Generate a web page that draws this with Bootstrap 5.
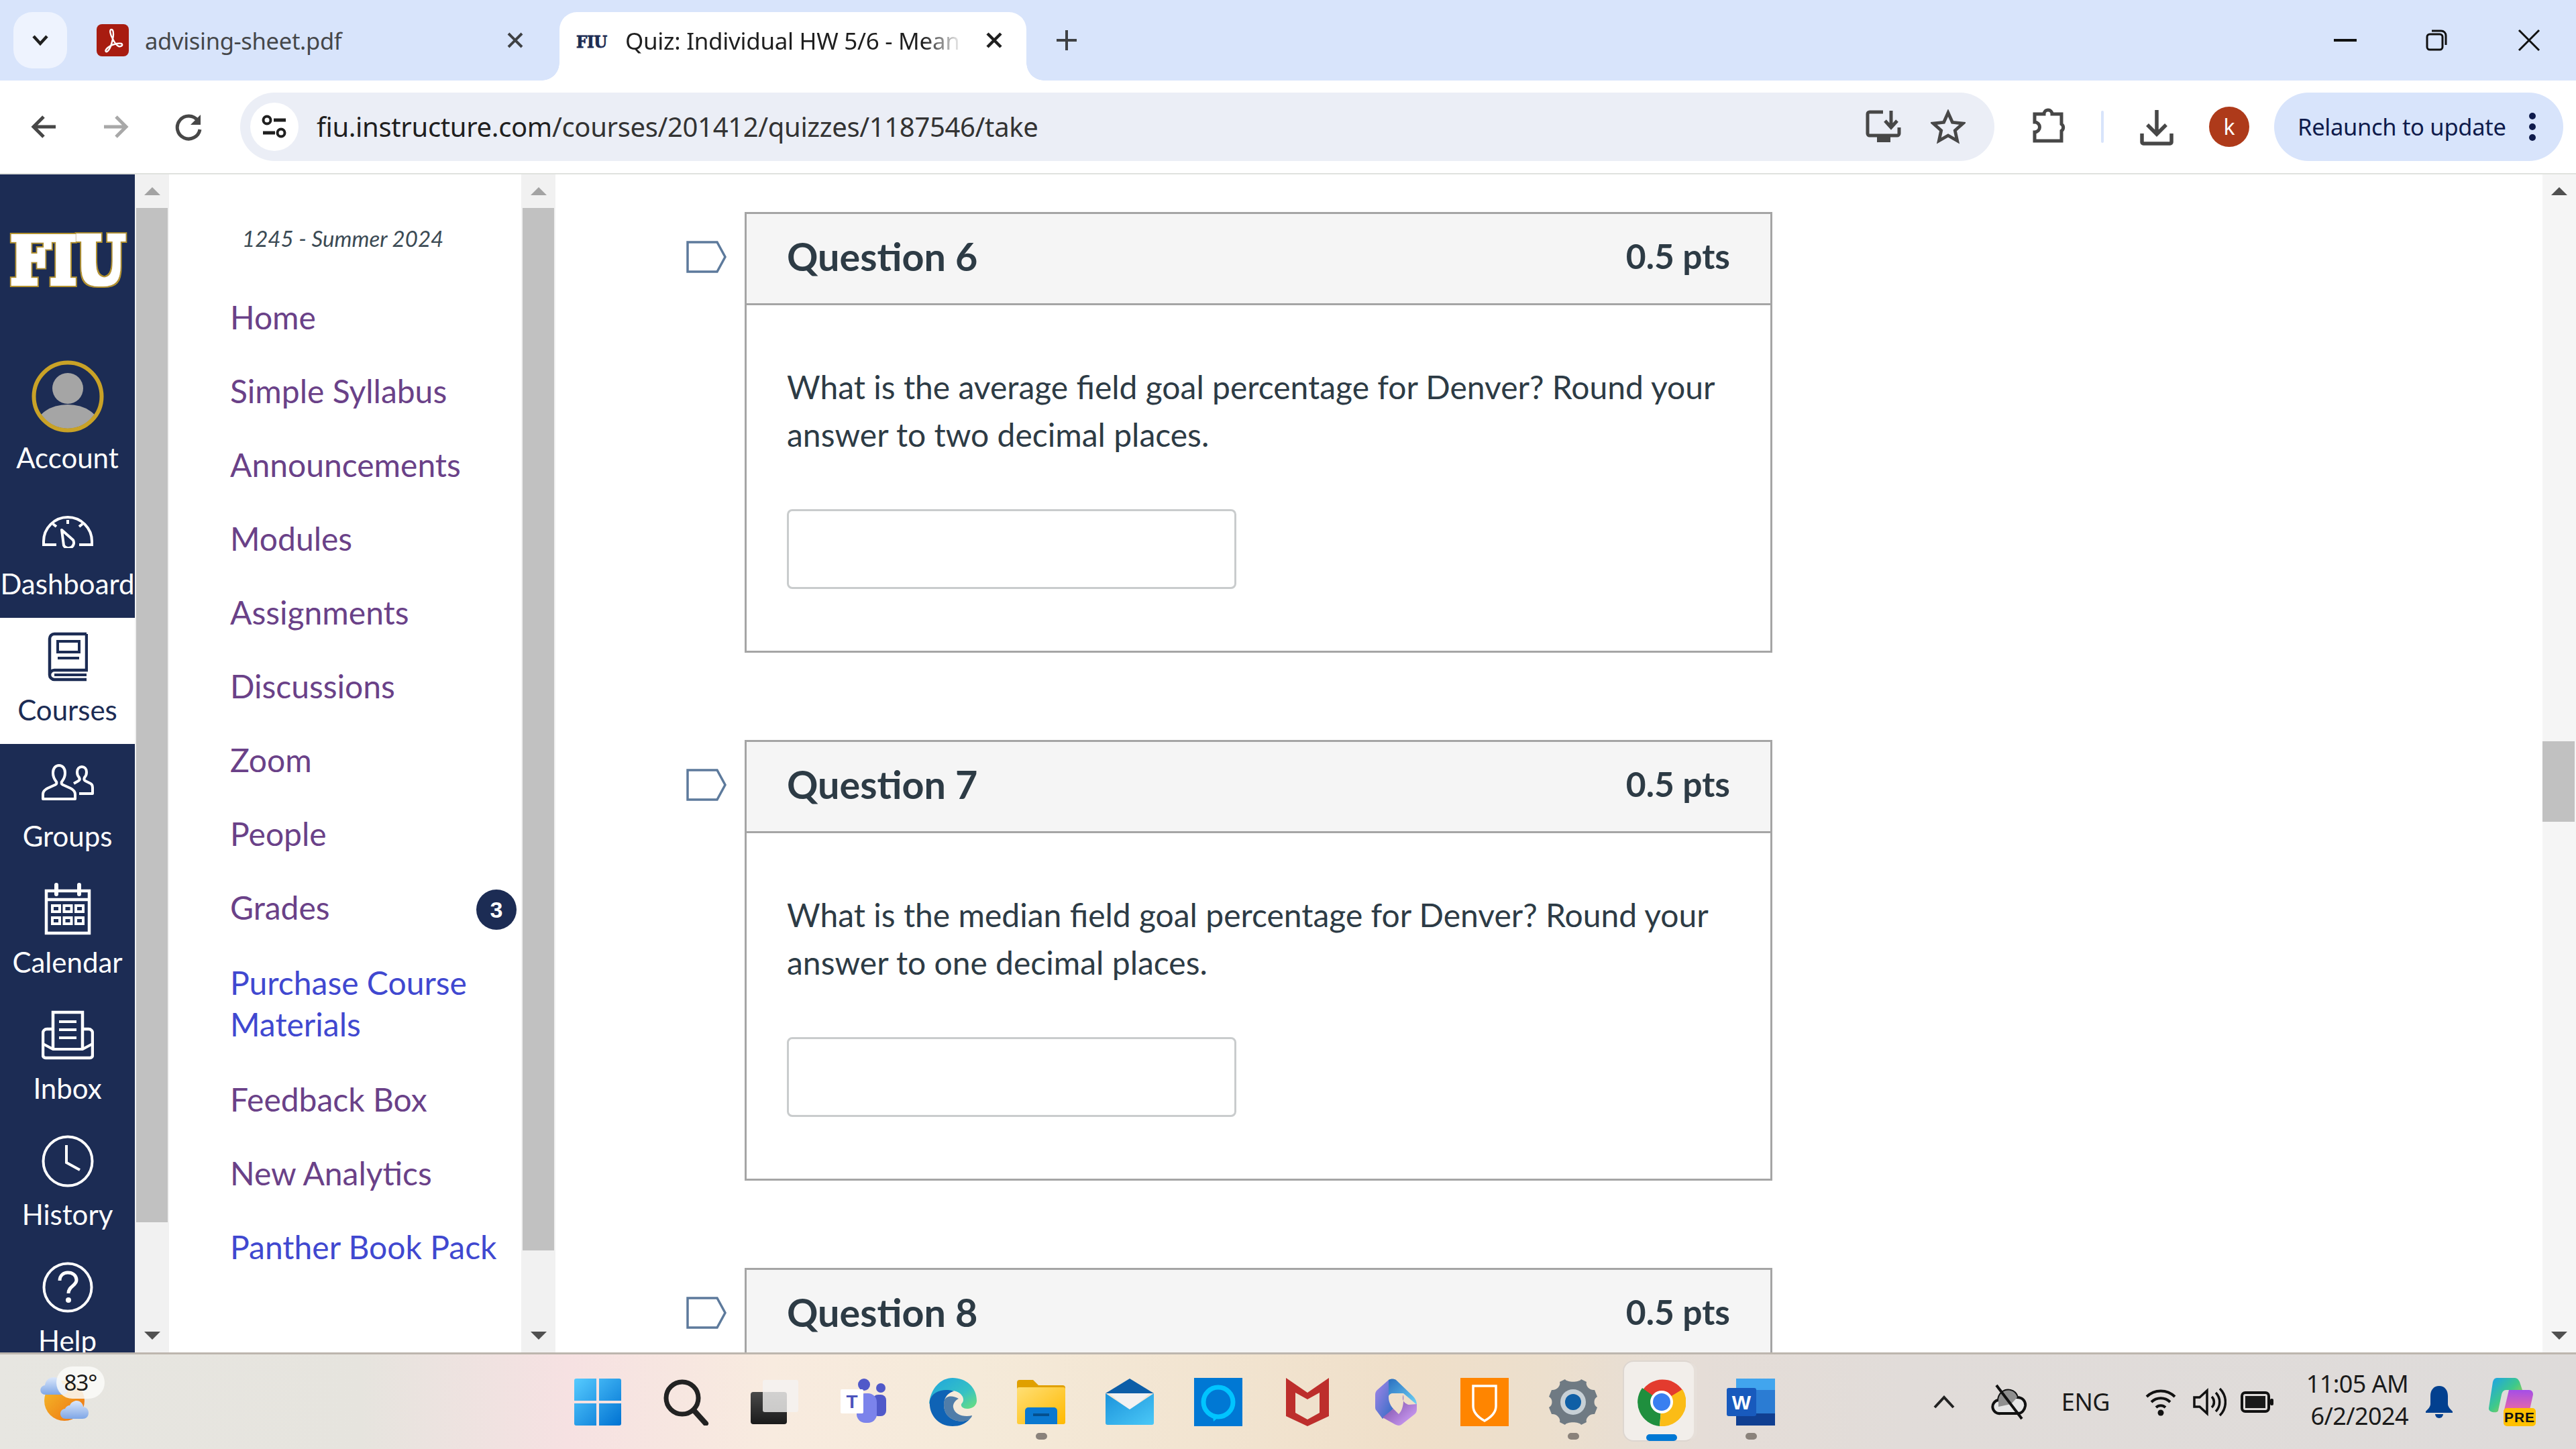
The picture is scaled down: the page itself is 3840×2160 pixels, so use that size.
<!DOCTYPE html>
<html lang="en">
<head>
<meta charset="utf-8">
<title>Quiz: Individual HW 5/6 - Mean</title>
<link href="https://cdn.jsdelivr.net/npm/bootstrap@5.3.0/dist/css/bootstrap.min.css" rel="stylesheet">
<style>
html,body{width:3840px;height:2160px;overflow:hidden;background:#fff;font-family:"Lato",sans-serif}
.ui-font{font-family:"Noto Sans","Open Sans",sans-serif}
.tabstrip{height:120px;background:#d8e4fb;padding-top:18px;padding-left:20px}
.tab-menu{width:80px;height:84px;border-radius:28px;background:#eef3fe;margin-right:24px}
.tab-idle{width:710px;height:102px;padding-left:20px;padding-top:18px;font-size:34.5px;color:#45474a;letter-spacing:-.3px}
.tab-idle .tab-title{margin-left:24px;width:400px}
.tab-idle .tab-x{margin-left:auto;margin-right:49px;margin-top:7px}
.tab-on{width:696px;height:102px;background:#fff;border-radius:26px 26px 0 0;padding-left:24px;padding-top:18px;font-size:35px;color:#1f1f1f;position:relative;letter-spacing:-.3px}
.tab-on::before,.tab-on::after{content:"";position:absolute;bottom:0;width:26px;height:26px}
.tab-on::before{left:-26px;background:radial-gradient(circle at 0 0,#d8e4fb 25.5px,#fff 26px)}
.tab-on::after{right:-26px;background:radial-gradient(circle at 100% 0,#d8e4fb 25.5px,#fff 26px)}
.tab-title{white-space:nowrap;overflow:hidden;line-height:50px}
.tab-on .tab-title{flex:0 0 505px;margin-left:26px;margin-right:28px;-webkit-mask-image:linear-gradient(90deg,#000 88%,rgba(0,0,0,.05) 99%);mask-image:linear-gradient(90deg,#000 88%,rgba(0,0,0,.05) 99%)}
.tab-on .tab-x{margin-top:7px;flex:none}
.tab-new{margin-left:43px;height:84px}
.win-btns{margin-left:auto;height:84px}
.win-slot{width:136px}
.win-slot.last{width:140px}
.toolbar{height:140px;background:#fff;border-radius:26px 26px 0 0;border-bottom:2px solid #e0e2de;padding:18px 0 0 11px}
.tool-slot{width:108px;height:102px;flex:none}
.omni{width:2615px;height:102px;border-radius:51px;background:#ebeef6;margin-left:23px;padding-left:15px;padding-right:43px;flex:none}
.omni-site{width:72px;height:72px;border-radius:50%;background:#fff;flex:none}
.omni-url{margin-left:27px;font-size:40px;color:#1f1f1f;letter-spacing:-.35px;white-space:nowrap}
.omni-url span{color:#333}
.omni-install{margin-left:auto;margin-right:43px}
.tool-sep{width:4px;height:48px;background:#d8e4fb;border-radius:2px;margin:0 24px}
.avatar-k{width:60px;height:60px;border-radius:50%;background:#ae3a1a;color:#fff;font-size:32px}
.relaunch{width:431px;height:102px;border-radius:51px;background:#d8e4fb;color:#0f1b4c;font-size:34.5px;padding-left:35px;margin-left:27px;white-space:nowrap;letter-spacing:-.3px;flex:none}
.relaunch svg{margin-left:33px}
.workspace{height:1756px;font-family:"Lato",sans-serif}
.sidenav{width:201px;background:#1c2c54;color:#fff;overflow:hidden;font-size:42px;flex:none}
.side-logo{height:273px;padding-top:82px;flex:none}
.side-item{height:188px;padding-top:18px;flex:none}
.side-item.first{height:200px;padding-top:0}
.side-icon{height:80px;flex:none}
.side-item.first .side-icon{height:116px}
.side-text{line-height:60px;margin-top:9px;white-space:nowrap;text-align:center;width:201px}
.side-item.first .side-text{margin-top:3px}
.side-item.active{background:#fff;color:#1c2c54}
.fake-scroll{width:51px;background:#f1f1f1;flex:none}
.fake-scroll.page{width:50px;background:#f5f5f5}
.fake-arrow{height:50px;flex:none}
.fake-thumb{background:#c1c1c1;margin:0 2px}
.page .fake-thumb{height:120px;margin:795px 2px 0 0}
.coursenav{width:525px;padding-left:91px;overflow:hidden;position:relative;font-size:48px;flex:none}
.term{height:158px;padding-top:64px;line-height:62px;padding-left:18px;font-size:33px;font-style:italic;color:#3b4a54;white-space:nowrap}
.cn-link{display:block;line-height:62px;padding:24px 0;color:#6a4188;text-decoration:none;white-space:nowrap}
.cn-link.fresh{color:#4048d0}
.cn-link.wrap2{padding:26px 0}
.grade-count{position:absolute;left:458px;top:1066px;width:60px;height:60px;border-radius:50%;background:#1c2c54;color:#fff;font-family:"Liberation Sans",sans-serif;font-weight:700;font-size:34px}
.mainpane{overflow:hidden;padding-top:56px;min-width:0}
.qrow{margin-bottom:130px;flex:none}
.qflag{width:282px;flex:none;padding-left:195px;padding-top:43px}
.qcard{width:1532px;border:3px solid #a5a5a5;border-radius:0;color:#2d3b45;flex:none}
.qhead{height:136px;background:#f5f5f5;border-bottom:3px solid #a5a5a5;border-radius:0!important;padding:0 60px 8px;display:flex;align-items:center;justify-content:space-between}
.qname{font-size:57.5px;font-weight:700;margin:0;font-family:"Lato",sans-serif;color:#2d3b45}
.qpts{font-size:51.5px;font-weight:700}
.qbody{padding:86px 60px 92px}
.qtext{font-size:48px;line-height:71px;margin:0 0 76px;width:1420px}
.qinput{width:670px;height:119px;border:3px solid #c9cccd;border-radius:8px;box-shadow:none}
.taskbar{height:144px;border-top:3px solid #bdb6ae;background:linear-gradient(90deg,#e7e6e1 0,#e6e4de 14%,#f6e1e2 22%,#f8ebdf 30%,#f5ead9 38%,#efdfc9 55%,#ecdfcd 60%,#e5ddd7 66%,#e1dcd9 74%,#dedbda 100%);position:relative}
.weather{width:825px;height:141px;position:relative;flex:none}
.wx-temp{position:absolute;left:84px;top:18px;width:72px;height:48px;border-radius:24px;background:rgba(250,250,248,.86);font-size:33px;color:#1b1b1b;font-family:"Noto Sans",sans-serif;letter-spacing:-1px}
.tb-slot{width:132.2px;height:141px;position:relative;flex:none}
.tb-slot svg{position:relative}
.tb-dot{position:absolute;bottom:14px;left:50%;margin-left:-8px;width:17px;height:10px;border-radius:5px;background:#8a827b}
.tb-slot.running .tb-dot{background:#0078d4;width:46px;margin-left:-23px;bottom:12px}
.tb-slot.running::before{content:"";position:absolute;left:10px;top:11px;width:104px;height:117px;background:#f2eeea;border-radius:14px;box-shadow:6px 0 0 -1px #e6dfd9,0 0 0 2px #ddd6d0}
.tray{margin-left:auto;padding-right:34px;height:141px;color:#1b1b1b}
.tray-slot{height:141px;flex:none}
.clock{width:180px;text-align:right;font-size:36px;line-height:48px;letter-spacing:-.6px;padding-top:20px}
.eng{font-size:36px;letter-spacing:-.4px}
</style>
</head>
<body>
<div class="d-flex flex-column vh-100 ui-font">

  <div class="tabstrip d-flex">
    <div class="tab-menu d-flex align-items-center justify-content-center">
      <svg width="30" height="20" viewBox="0 0 30 20"><path d="M5 4l10 11L25 4" fill="none" stroke="#1f1f1f" stroke-width="4.5"/></svg>
    </div>
    <div class="tab-idle d-flex align-items-start">
      <svg width="48" height="48" viewBox="0 0 48 48"><rect width="48" height="48" rx="8" fill="#a81c10"/><path d="M22 8c-3 0 -2 7 2 14 3 6 6 10 9 11 4 1 7 -2 4 -4-3-1-10 0-16 3-5 3-9 7-7 9 2 1 5-3 7-8 2-6 4-12 4-18 0-5-1-7-3-7z" fill="none" stroke="#fff" stroke-width="2.4"/></svg>
      <span class="tab-title">advising-sheet.pdf</span>
      <svg class="tab-x" width="34" height="34" viewBox="0 0 34 34"><path d="M7 7l20 20M27 7L7 27" stroke="#3f4144" stroke-width="4"/></svg>
    </div>
    <div class="tab-on d-flex align-items-start">
      <svg style="flex:none" width="48" height="48" viewBox="0 0 48 48"><text x="24" y="35" text-anchor="middle" font-family="DejaVu Serif Condensed" font-weight="700" font-size="25" textLength="46" lengthAdjust="spacingAndGlyphs" fill="#1c2c54" stroke="#1c2c54" stroke-width=".8">FIU</text></svg>
      <span class="tab-title">Quiz: Individual HW 5/6 - Mean</span>
      <svg class="tab-x" width="34" height="34" viewBox="0 0 34 34"><path d="M7 7l20 20M27 7L7 27" stroke="#1f1f1f" stroke-width="4.5"/></svg>
    </div>
    <div class="tab-new d-flex align-items-center">
      <svg width="34" height="34" viewBox="0 0 34 34"><path d="M17 2v30M2 17h30" stroke="#3f4144" stroke-width="4"/></svg>
    </div>
    <div class="win-btns d-flex align-items-center">
      <div class="win-slot d-flex justify-content-center"><svg width="34" height="6"><rect width="34" height="4" y="1" fill="#111"/></svg></div>
      <div class="win-slot d-flex justify-content-center"><svg width="34" height="34" viewBox="0 0 34 34"><rect x="3" y="8" width="23" height="23" rx="4" fill="none" stroke="#111" stroke-width="3"/><path d="M10 3h14a7 7 0 0 1 7 7v14" fill="none" stroke="#111" stroke-width="3"/></svg></div>
      <div class="win-slot last d-flex justify-content-center"><svg width="34" height="34" viewBox="0 0 34 34"><path d="M2 2l30 30M32 2L2 32" stroke="#111" stroke-width="3"/></svg></div>
    </div>
  </div>

  <div class="toolbar d-flex align-items-start">
    <div class="tool-slot d-flex align-items-center justify-content-center">
      <svg width="44" height="44" viewBox="0 0 44 44"><path d="M40 22H8M22 7L7 22l15 15" fill="none" stroke="#474747" stroke-width="5"/></svg>
    </div>
    <div class="tool-slot d-flex align-items-center justify-content-center">
      <svg width="44" height="44" viewBox="0 0 44 44"><path d="M4 22h32M22 7l15 15-15 15" fill="none" stroke="#a8a8a8" stroke-width="5"/></svg>
    </div>
    <div class="tool-slot d-flex align-items-center justify-content-center">
      <svg width="44" height="44" viewBox="0 0 44 44"><path d="M36 13a17 17 0 1 0 3 13" fill="none" stroke="#474747" stroke-width="5"/><path d="M40 4v15H25z" fill="#474747"/></svg>
    </div>
    <div class="omni d-flex align-items-center">
      <div class="omni-site d-flex align-items-center justify-content-center">
        <svg width="40" height="40" viewBox="0 0 40 40"><circle cx="9" cy="10" r="5.5" fill="none" stroke="#1f1f1f" stroke-width="4"/><path d="M19 10h18M3 29h18" stroke="#1f1f1f" stroke-width="5"/><circle cx="30" cy="29" r="5.5" fill="none" stroke="#1f1f1f" stroke-width="4"/></svg>
      </div>
      <div class="omni-url">fiu.instructure.com<span>/courses/201412/quizzes/1187546/take</span></div>
      <svg class="omni-install" width="54" height="54" viewBox="0 0 54 54"><path d="M26 5H6a3 3 0 0 0-3 3v29a3 3 0 0 0 3 3h41a3 3 0 0 0 3-3v-9" fill="none" stroke="#474747" stroke-width="5"/><rect x="17" y="40" width="20" height="10" fill="#474747"/><path d="M38 3v22M29 18l9 10 9-10" fill="none" stroke="#474747" stroke-width="5"/></svg>
      <svg width="52" height="52" viewBox="0 0 52 52"><path d="M26 5l6.4 14.3 15.6 1.7-11.7 10.5 3.3 15.3L26 39l-13.600 7.800 3.300-15.300L4 21l15.600-1.700z" fill="none" stroke="#474747" stroke-width="4.800" stroke-linejoin="miter"/></svg>
    </div>
    <div class="tool-slot d-flex align-items-center justify-content-center ext-slot" style="margin-left:25px;width:110px">
      <svg width="56" height="56" viewBox="0 0 56 56"><path d="M22 9a6 6 0 0 1 12 0h14v15a6 6 0 0 1 0 10v15H8V36a7 7 0 0 0 0-15V9z" fill="none" stroke="#474747" stroke-width="5"/></svg>
    </div>
    <div class="d-flex align-items-center" style="height:102px"><div class="tool-sep"></div></div>
    <div class="tool-slot d-flex align-items-center justify-content-center" style="width:110px">
      <svg width="50" height="56" viewBox="0 0 50 56"><path d="M25 3v34M11 25l14 14 14-14" fill="none" stroke="#474747" stroke-width="5.500"/><path d="M3 38v13a2 2 0 0 0 2 2h40a2 2 0 0 0 2-2V38" fill="none" stroke="#474747" stroke-width="5.500"/></svg>
    </div>
    <div class="d-flex align-items-center justify-content-center" style="height:102px;width:80px;margin-left:13px">
      <div class="avatar-k d-flex align-items-center justify-content-center">k</div>
    </div>
    <div class="relaunch d-flex align-items-center">
      <span>Relaunch to update</span>
      <svg width="12" height="44" viewBox="0 0 12 44"><circle cx="6" cy="6" r="5" fill="#0f1b4c"/><circle cx="6" cy="22" r="5" fill="#0f1b4c"/><circle cx="6" cy="38" r="5" fill="#0f1b4c"/></svg>
    </div>
  </div>

  <div class="workspace d-flex">
    <nav class="sidenav d-flex flex-column">
      <div class="side-logo d-flex justify-content-center">
        <svg width="196" height="96" viewBox="0 0 196 96"><defs><filter id="fiuedge" x="-10%" y="-20%" width="120%" height="140%"><feMorphology in="SourceAlpha" operator="dilate" radius="5" result="outer"/><feFlood flood-color="#b4932f"/><feComposite in2="outer" operator="in" result="gold"/><feMorphology in="SourceAlpha" operator="dilate" radius="3" result="inner"/><feFlood flood-color="#fff"/><feComposite in2="inner" operator="in" result="white"/><feMerge><feMergeNode in="gold"/><feMergeNode in="white"/></feMerge></filter></defs><text x="98" y="81" text-anchor="middle" font-family="DejaVu Serif Condensed" font-weight="700" font-size="98" textLength="170" lengthAdjust="spacingAndGlyphs" fill="#fff" filter="url(#fiuedge)">FIU</text></svg>
      </div>
      <div class="side-item first d-flex flex-column align-items-center">
        <div class="side-icon d-flex align-items-center justify-content-center">
          <svg width="108" height="108" viewBox="0 0 108 108"><defs><clipPath id="avclip"><circle cx="54" cy="54" r="48"/></clipPath></defs><g clip-path="url(#avclip)"><circle cx="54" cy="42" r="23" fill="#a5a5a5"/><ellipse cx="54" cy="100" rx="48" ry="34" fill="#a5a5a5"/></g><circle cx="54" cy="54" r="50.500" fill="none" stroke="#c9a227" stroke-width="6"/></svg>
        </div>
        <div class="side-text">Account</div>
      </div>
      <div class="side-item d-flex flex-column align-items-center">
        <div class="side-icon d-flex align-items-center justify-content-center">
          <svg width="78" height="52" viewBox="0 0 78 52"><path d="M22 47H3v-5a36 36 0 0 1 72 0v5H56" fill="none" stroke="#fff" stroke-width="4"/><path d="M39 10v6M17 16l5 4M61 16l-5 4" stroke="#fff" stroke-width="4"/><path d="M30 25l17 15a8 8 0 0 1-14 8z" fill="none" stroke="#fff" stroke-width="4" stroke-linejoin="round"/></svg>
        </div>
        <div class="side-text">Dashboard</div>
      </div>
      <div class="side-item active d-flex flex-column align-items-center">
        <div class="side-icon d-flex align-items-center justify-content-center">
          <svg width="60" height="74" viewBox="0 0 60 74"><path d="M58 3H10a7 7 0 0 0-7 7v54a7 7 0 0 0 7 7h48M58 3v54H10a7 7 0 0 0-7 7" fill="none" stroke="#1c2c54" stroke-width="4.500"/><rect x="15" y="14" width="32" height="16" fill="none" stroke="#1c2c54" stroke-width="4"/><path d="M15 39h32M10 64h48" stroke="#1c2c54" stroke-width="4"/></svg>
        </div>
        <div class="side-text">Courses</div>
      </div>
      <div class="side-item d-flex flex-column align-items-center">
        <div class="side-icon d-flex align-items-center justify-content-center">
          <svg width="80" height="56" viewBox="0 0 80 56"><path d="M3 52v-7c0-4 3-7 7-9l11-5c3-1 3-4 1-6-3-4-4-8-4-12 0-7 4-11 9-11s9 4 9 11c0 4-1 8-4 12-2 2-2 5 1 6l11 5c4 2 7 5 7 9v7z" fill="none" stroke="#fff" stroke-width="4" stroke-linejoin="round"/><path d="M49 29l7-4c2-1 2-3 1-5-2-2-3-5-3-8 0-5 3-8 7-8s7 3 7 8c0 3-1 6-3 8-1 2-1 4 1 5l8 4c2 1 3 3 3 6v9H57" fill="none" stroke="#fff" stroke-width="4" stroke-linejoin="round"/></svg>
        </div>
        <div class="side-text">Groups</div>
      </div>
      <div class="side-item d-flex flex-column align-items-center">
        <div class="side-icon d-flex align-items-center justify-content-center">
          <svg width="70" height="78" viewBox="0 0 70 78"><path d="M3 75V12h64v63zM3 25h64" fill="none" stroke="#fff" stroke-width="4.500"/><path d="M18 3v14M52 3v14" stroke="#fff" stroke-width="6" stroke-linecap="round"/><g fill="none" stroke="#fff" stroke-width="4"><rect x="12" y="34" width="11" height="9"/><rect x="29.500" y="34" width="11" height="9"/><rect x="47" y="34" width="11" height="9"/><rect x="12" y="52" width="11" height="9"/><rect x="29.500" y="52" width="11" height="9"/><rect x="47" y="52" width="11" height="9"/></g></svg>
        </div>
        <div class="side-text">Calendar</div>
      </div>
      <div class="side-item d-flex flex-column align-items-center">
        <div class="side-icon d-flex align-items-center justify-content-center">
          <svg width="78" height="74" viewBox="0 0 78 74"><path d="M16 28H8a6 6 0 0 0-6 6v33a4 4 0 0 0 4 4h66a4 4 0 0 0 4-4V34a6 6 0 0 0-6-6h-8" fill="none" stroke="#fff" stroke-width="4.500"/><path d="M2 50l15 8h44l15-8" fill="none" stroke="#fff" stroke-width="4"/><path d="M17 57V3h44v54" fill="none" stroke="#fff" stroke-width="4.500"/><path d="M26 17h26M26 29h26M26 41h26" stroke="#fff" stroke-width="4"/></svg>
        </div>
        <div class="side-text">Inbox</div>
      </div>
      <div class="side-item d-flex flex-column align-items-center">
        <div class="side-icon d-flex align-items-center justify-content-center">
          <svg width="78" height="78" viewBox="0 0 78 78"><circle cx="39" cy="39" r="36.500" fill="none" stroke="#fff" stroke-width="4"/><path d="M37 15v26l20 11" fill="none" stroke="#fff" stroke-width="4"/></svg>
        </div>
        <div class="side-text">History</div>
      </div>
      <div class="side-item d-flex flex-column align-items-center">
        <div class="side-icon d-flex align-items-center justify-content-center">
          <svg width="76" height="76" viewBox="0 0 76 76"><circle cx="38" cy="38" r="35.500" fill="none" stroke="#fff" stroke-width="4"/><path d="M26 28c0-8 6-12 12-12 7 0 13 4 13 11 0 9-12 9-12 20" fill="none" stroke="#fff" stroke-width="5"/><circle cx="39" cy="57" r="4" fill="#fff"/></svg>
        </div>
        <div class="side-text">Help</div>
      </div>
    </nav>

    <div class="fake-scroll d-flex flex-column">
      <div class="fake-arrow d-flex align-items-center justify-content-center"><svg width="26" height="14"><path d="M13 1L25 13H1z" fill="#a3a3a3"/></svg></div>
      <div class="fake-thumb" style="height:1512px"></div>
      <div class="fake-arrow d-flex align-items-center justify-content-center mt-auto"><svg width="26" height="14"><path d="M13 13L25 1H1z" fill="#505050"/></svg></div>
    </div>

    <div class="coursenav">
      <div class="term">1245 - Summer 2024</div>
      <a class="cn-link" href="#">Home</a>
      <a class="cn-link" href="#">Simple Syllabus</a>
      <a class="cn-link" href="#">Announcements</a>
      <a class="cn-link" href="#">Modules</a>
      <a class="cn-link" href="#">Assignments</a>
      <a class="cn-link" href="#">Discussions</a>
      <a class="cn-link" href="#">Zoom</a>
      <a class="cn-link" href="#">People</a>
      <a class="cn-link" href="#">Grades</a>
      <a class="cn-link fresh wrap2" href="#">Purchase Course<br>Materials</a>
      <a class="cn-link" href="#">Feedback Box</a>
      <a class="cn-link" href="#">New Analytics</a>
      <a class="cn-link fresh" href="#">Panther Book Pack</a>
      <div class="grade-count d-flex align-items-center justify-content-center">3</div>
    </div>

    <div class="fake-scroll d-flex flex-column">
      <div class="fake-arrow d-flex align-items-center justify-content-center"><svg width="26" height="14"><path d="M13 1L25 13H1z" fill="#a3a3a3"/></svg></div>
      <div class="fake-thumb" style="height:1554px"></div>
      <div class="fake-arrow d-flex align-items-center justify-content-center mt-auto"><svg width="26" height="14"><path d="M13 13L25 1H1z" fill="#505050"/></svg></div>
    </div>

    <main class="mainpane flex-grow-1 d-flex flex-column">
      <div class="qrow d-flex">
        <div class="qflag"><svg width="60" height="48" viewBox="0 0 60 48"><path d="M2 2h44l12 22-12 22H2z" fill="none" stroke="#5d7a9c" stroke-width="3.500"/></svg></div>
        <div class="card qcard">
          <div class="card-header qhead"><h2 class="qname">Question 6</h2><span class="qpts">0.5 pts</span></div>
          <div class="card-body qbody">
            <p class="qtext">What is the average field goal percentage for Denver? Round your answer to two decimal places.</p>
            <input class="form-control qinput" type="text" aria-label="Answer">
          </div>
        </div>
      </div>
      <div class="qrow d-flex">
        <div class="qflag"><svg width="60" height="48" viewBox="0 0 60 48"><path d="M2 2h44l12 22-12 22H2z" fill="none" stroke="#5d7a9c" stroke-width="3.500"/></svg></div>
        <div class="card qcard">
          <div class="card-header qhead"><h2 class="qname">Question 7</h2><span class="qpts">0.5 pts</span></div>
          <div class="card-body qbody">
            <p class="qtext">What is the median field goal percentage for Denver? Round your answer to one decimal places.</p>
            <input class="form-control qinput" type="text" aria-label="Answer">
          </div>
        </div>
      </div>
      <div class="qrow d-flex">
        <div class="qflag"><svg width="60" height="48" viewBox="0 0 60 48"><path d="M2 2h44l12 22-12 22H2z" fill="none" stroke="#5d7a9c" stroke-width="3.500"/></svg></div>
        <div class="card qcard">
          <div class="card-header qhead"><h2 class="qname">Question 8</h2><span class="qpts">0.5 pts</span></div>
        </div>
      </div>
    </main>

    <div class="fake-scroll page d-flex flex-column">
      <div class="fake-arrow d-flex align-items-center justify-content-center"><svg width="26" height="14"><path d="M13 1L25 13H1z" fill="#505050"/></svg></div>
      <div class="fake-thumb"></div>
      <div class="fake-arrow d-flex align-items-center justify-content-center mt-auto"><svg width="26" height="14"><path d="M13 13L25 1H1z" fill="#505050"/></svg></div>
    </div>
  </div>

  <footer class="taskbar d-flex">
    <div class="weather">
      <svg width="160" height="141" viewBox="0 0 160 141"><defs><linearGradient id="wxs" x1="0" y1="0" x2="1" y2="1"><stop offset="0" stop-color="#f4c02c"/><stop offset="1" stop-color="#ee6f10"/></linearGradient><linearGradient id="wxc" x1="0" y1="0" x2="0" y2="1"><stop offset="0" stop-color="#dbe7fb"/><stop offset="1" stop-color="#7ea6e6"/></linearGradient></defs><circle cx="96" cy="69" r="30" fill="url(#wxs)"/><path d="M68 60c-10 0-10-13-1-14 1-8 7-12 13-12 7 0 12 4 13 10 6 1 8 4 8 8 0 5-3 8-8 8z" fill="url(#wxc)"/><path d="M98 96c-10 0-11-14-1-15 1-3 4-5 7-5 2-5 7-7 10-7 6 0 10 5 10 9 6 1 8 5 8 9 0 6-4 9-9 9z" fill="url(#wxc)"/></svg>
      <div class="wx-temp d-flex align-items-center justify-content-center">83°</div>
    </div>
    <div class="tb-slot d-flex align-items-center justify-content-center">
      <svg width="70" height="70" viewBox="0 0 70 70"><defs><linearGradient id="wg" x1="0" y1="0" x2="1" y2="1"><stop offset="0" stop-color="#56cbff"/><stop offset="1" stop-color="#0072d2"/></linearGradient></defs><path d="M3 0h30v33H0V3a3 3 0 0 1 3-3zM37 0h30a3 3 0 0 1 3 3v30H37zM0 37h33v33H3a3 3 0 0 1-3-3zM37 37h33v30a3 3 0 0 1-3 3H37z" fill="url(#wg)"/></svg>
    </div>
    <div class="tb-slot d-flex align-items-center justify-content-center">
      <svg width="70" height="70" viewBox="0 0 70 70"><circle cx="29" cy="29" r="24" fill="none" stroke="#222" stroke-width="7"/><path d="M46 47l18 20" stroke="#222" stroke-width="8" stroke-linecap="round"/></svg>
    </div>
    <div class="tb-slot d-flex align-items-center justify-content-center">
      <svg width="72" height="66" viewBox="0 0 72 66"><defs><linearGradient id="tvd" x1="0" y1="0" x2="0" y2="1"><stop offset="0" stop-color="#4a4a4a"/><stop offset="1" stop-color="#1a1a1a"/></linearGradient></defs><rect x="0" y="18" width="54" height="48" rx="4" fill="url(#tvd)"/><rect x="18" y="0" width="53" height="48" rx="3" fill="#f4f3f1" opacity=".8"/></svg>
    </div>
    <div class="tb-slot d-flex align-items-center justify-content-center">
      <svg width="74" height="70" viewBox="0 0 74 70"><circle cx="37" cy="9" r="9" fill="#5059c9"/><circle cx="62" cy="14" r="7" fill="#5059c9"/><rect x="50" y="24" width="20" height="32" rx="8" fill="#5059c9"/><rect x="26" y="22" width="30" height="44" rx="13" fill="#7b83eb"/><rect x="2" y="16" width="34" height="36" rx="2" fill="#fff"/><text x="19" y="44" text-anchor="middle" font-family="Liberation Sans" font-size="28" font-weight="700" fill="#4b53bc">T</text></svg>
    </div>
    <div class="tb-slot d-flex align-items-center justify-content-center">
      <svg width="72" height="72" viewBox="0 0 72 72"><defs><linearGradient id="eg1" x1="0" y1="0" x2="1" y2="1"><stop offset="0" stop-color="#1fa4de"/><stop offset=".6" stop-color="#35c1c5"/><stop offset="1" stop-color="#6fe07a"/></linearGradient></defs><path d="M36 0c20 0 36 14 36 34 0 7-6 12-14 12-6 0-10-3-9-7 3-3 4-6 2-11-3-6-10-9-17-9-14 0-26 8-33 20C3 16 18 0 36 0z" fill="url(#eg1)"/><path d="M2 34c-2 20 12 38 34 38 10 0 19-3 26-11-8 5-20 5-29-1-8-5-12-16-9-27 2-7 8-12 14-13C24 15 5 20 2 34z" fill="#0f63b5"/><path d="M24 33c-3 11 1 22 9 27 9 6 21 6 29 1 2-2 3-4 3-5-12 3-26-1-28-12-1-5 3-11 8-13-8-5-18-5-21 2z" fill="#0a4f94" opacity=".7"/></svg>
    </div>
    <div class="tb-slot d-flex align-items-center justify-content-center">
      <svg width="72" height="66" viewBox="0 0 72 66"><path d="M0 4a4 4 0 0 1 4-4h20l8 8h36a4 4 0 0 1 4 4v4H0z" fill="#e0a000"/><defs><linearGradient id="fg" x1="0" y1="0" x2="1" y2="1"><stop offset="0" stop-color="#ffdf75"/><stop offset="1" stop-color="#ffb900"/></linearGradient></defs><rect y="11" width="72" height="55" rx="3" fill="url(#fg)"/><path d="M12 66V46a5 5 0 0 1 5-5h38a5 5 0 0 1 5 5v20z" fill="#0a78d0"/><rect x="24" y="50" width="24" height="4" fill="#04508f"/></svg>
      <span class="tb-dot"></span>
    </div>
    <div class="tb-slot d-flex align-items-center justify-content-center">
      <svg width="72" height="70" viewBox="0 0 72 70"><defs><linearGradient id="mg" x1="0" y1="0" x2="1" y2="1"><stop offset="0" stop-color="#1b93db"/><stop offset="1" stop-color="#4bc8f7"/></linearGradient></defs><path d="M36 0L72 22H0z" fill="#0c5ea8"/><path d="M6 22h60L36 48z" fill="#f2f2f2"/><path d="M0 22l36 24 36-24v44a3 3 0 0 1-3 3H3a3 3 0 0 1-3-3z" fill="url(#mg)"/></svg>
    </div>
    <div class="tb-slot d-flex align-items-center justify-content-center">
      <svg width="72" height="72" viewBox="0 0 72 72"><rect width="72" height="72" fill="#0078d4"/><circle cx="36" cy="36" r="22" fill="none" stroke="#00c4ff" stroke-width="7"/><path d="M30 58l-2 0 1 7 8-7z" fill="#00c4ff"/></svg>
    </div>
    <div class="tb-slot d-flex align-items-center justify-content-center">
      <svg width="64" height="72" viewBox="0 0 64 72"><path d="M0 0l32 22L64 0v57L32 72 0 57z" fill="#bd2e2c"/><path d="M14 22l18 10 18-10v30L32 62 14 52z" fill="#efe1cd"/></svg>
    </div>
    <div class="tb-slot d-flex align-items-center justify-content-center">
      <svg width="62" height="70" viewBox="0 0 62 70"><defs><linearGradient id="cpa" x1="0" y1="0" x2="1" y2="1"><stop offset="0" stop-color="#2b6fc0"/><stop offset="1" stop-color="#6ed3f5"/></linearGradient><linearGradient id="cpb" x1="0" y1="0" x2="1" y2="1"><stop offset="0" stop-color="#a585e8"/><stop offset="1" stop-color="#2f6cc4"/></linearGradient><linearGradient id="cpc" x1="0" y1="0" x2="1" y2="1"><stop offset="0" stop-color="#6b3f98"/><stop offset="1" stop-color="#d9a8ff"/></linearGradient></defs><path d="M20 2c3-2 8-2 11 0l25 24c4 4 6 8 6 13l-20-17H26c-3 0-5 2-6 4z" fill="url(#cpa)"/><path d="M20 2v26c0 6 3 13 7 17L11 60 2 48C0 46 0 44 0 42V24c0-3 1-5 3-7z" fill="url(#cpb)"/><path d="M42 24c-3 9 2 13 8 15l12-1v8c0 3-1 5-3 7L40 68c-3 3-8 2-11 0L11 58l16-13 8 8c5-5 8-13 7-29z" fill="url(#cpc)"/></svg>
    </div>
    <div class="tb-slot d-flex align-items-center justify-content-center">
      <svg width="72" height="72" viewBox="0 0 72 72"><rect width="72" height="72" fill="#ff8500"/><path d="M19 12h34v30c0 10-8 17-17 22-9-5-17-12-17-22z" fill="none" stroke="#fff" stroke-width="3.500"/></svg>
    </div>
    <div class="tb-slot d-flex align-items-center justify-content-center">
      <svg width="72" height="72" viewBox="0 0 72 72"><path d="M24 2c3 5 21 5 24 0l8 4c-2 6 5 13 12 12l4 10c-6 3-6 13 0 16l-4 10c-7-1-14 6-12 12l-8 4c-3-5-21-5-24 0l-8-4c2-6-5-13-12-12L0 44c6-3 6-13 0-16l4-10c7 1 14-6 12-12z" fill="#6f7a83"/><circle cx="36" cy="36" r="19" fill="#c7d0d6"/><circle cx="36" cy="36" r="12" fill="#0f5fa6"/></svg>
      <span class="tb-dot"></span>
    </div>
    <div class="tb-slot running d-flex align-items-center justify-content-center">
      <svg width="72" height="72" viewBox="0 0 72 72"><path d="M36 36L7 19A36 36 0 0 1 67 18z" fill="#e33b2e"/><path d="M36 36L33 72A36 36 0 0 1 7 15z" fill="#1f8f3e"/><path d="M36 36L67 17A36 36 0 0 1 33 72z" fill="#fbbc16"/><circle cx="36" cy="36" r="17" fill="#fff"/><circle cx="36" cy="36" r="13" fill="#3a7ff0"/></svg>
      <span class="tb-dot"></span>
    </div>
    <div class="tb-slot d-flex align-items-center justify-content-center">
      <svg width="72" height="70" viewBox="0 0 72 70"><path d="M14 0h54a4 4 0 0 1 4 4v62a4 4 0 0 1-4 4H14z" fill="#2b7cd3"/><rect x="14" y="0" width="58" height="17" fill="#41a5ee"/><rect x="14" y="52" width="58" height="18" fill="#103f91"/><rect y="14" width="44" height="42" rx="3" fill="#185abd"/><text x="22" y="46" text-anchor="middle" font-family="Liberation Sans" font-size="30" font-weight="700" fill="#fff">W</text></svg>
      <span class="tb-dot"></span>
    </div>
    <div class="tray d-flex align-items-center">
      <div class="tray-slot d-flex align-items-center justify-content-center" style="width:96px"><svg width="34" height="22" viewBox="0 0 34 22"><path d="M3 19L17 4l14 15" fill="none" stroke="#222" stroke-width="4"/></svg></div>
      <div class="tray-slot d-flex align-items-center justify-content-center" style="width:98px"><svg width="54" height="54" viewBox="0 0 54 54"><path d="M14 44a10 10 0 0 1-3-20c1-10 9-16 18-14 5 1 9 5 10 10 8 0 13 6 12 13-1 6-5 11-11 11z" fill="#e6e6e6" stroke="#111" stroke-width="4"/><path d="M11 24c1-10 9-16 18-14 5 1 9 5 10 10L30 30l-19 4z" fill="#8f8f8f"/><path d="M8 2l38 50" stroke="#111" stroke-width="4"/></svg></div>
      <div class="tray-slot eng d-flex align-items-center justify-content-center" style="width:130px">ENG</div>
      <div class="tray-slot d-flex align-items-center justify-content-center" style="width:94px"><svg width="48" height="44" viewBox="0 0 48 44"><path d="M3 14a30 30 0 0 1 42 0M10 22a20 20 0 0 1 28 0M17 30a10 10 0 0 1 14 0" fill="none" stroke="#111" stroke-width="4"/><circle cx="24" cy="38" r="4.500" fill="#111"/></svg></div>
      <div class="tray-slot d-flex align-items-center justify-content-center" style="width:52px"><svg width="50" height="44" viewBox="0 0 50 44"><path d="M2 15h8l11-10v34L10 29H2z" fill="none" stroke="#111" stroke-width="3.500"/><path d="M28 14a11 11 0 0 1 0 16M34 8a20 20 0 0 1 0 28M40 2a28 28 0 0 1 0 40" fill="none" stroke="#111" stroke-width="3.500"/></svg></div>
      <div class="tray-slot d-flex align-items-center justify-content-center" style="width:90px"><svg width="50" height="32" viewBox="0 0 50 32"><rect x="2" y="2" width="40" height="28" rx="5" fill="none" stroke="#111" stroke-width="4"/><rect x="7" y="7" width="30" height="18" fill="#1a1a1a"/><rect x="44" y="11" width="5" height="10" rx="2" fill="#111"/></svg></div>
      <div class="tray-slot clock">11:05 AM<br>6/2/2024</div>
      <div class="tray-slot d-flex align-items-center justify-content-center" style="width:92px"><svg width="42" height="48" viewBox="0 0 42 48"><path d="M21 0c-8 0-13 6-13 15v12c0 4-4 8-7 11v2h40v-2c-3-3-7-7-7-11V15C34 6 29 0 21 0z" fill="#02408f"/><path d="M15 42h12a6 6 0 0 1-12 0z" fill="#02408f"/></svg></div>
      <div class="tray-slot d-flex align-items-center justify-content-center" style="width:124px"><svg width="72" height="72" viewBox="0 0 72 72"><defs><linearGradient id="cp1" x1="0" y1="0" x2="1" y2="1"><stop offset="0" stop-color="#18a0f0"/><stop offset=".5" stop-color="#3fc98a"/><stop offset="1" stop-color="#e8d01f"/></linearGradient><linearGradient id="cp2" x1="0" y1="0" x2="0" y2="1"><stop offset="0" stop-color="#a44ee8"/><stop offset="1" stop-color="#f06ba0"/></linearGradient></defs><path d="M14 0h26c4 0 6 2 8 6l4 12H28c-4 0-6 3-7 7l-5 24c-1 4-15 3-14-4L8 6c1-4 3-6 6-6z" fill="url(#cp1)"/><path d="M32 18h30c4 0 6 3 6 7l-6 27H24z" fill="url(#cp2)"/><rect x="24" y="45" width="48" height="27" rx="5" fill="#ffc000"/><text x="48" y="66" text-anchor="middle" font-family="Liberation Sans" font-weight="700" font-size="21" fill="#111" letter-spacing="1">PRE</text></svg></div>
    </div>
  </footer>
</div>
<script src="https://cdn.jsdelivr.net/npm/bootstrap@5.3.0/dist/js/bootstrap.bundle.min.js"></script>
</body>
</html>
